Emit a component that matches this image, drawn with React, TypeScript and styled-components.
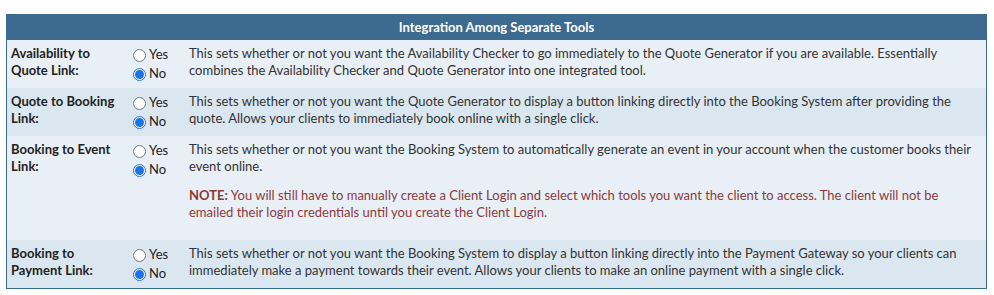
import { FC } from "react";
import styled, { createGlobalStyle } from "styled-components";

const GlobalStyle = createGlobalStyle`
  body {
    margin: 0;
    background: #ffffff;
    font-family: Lato, "Open Sans", sans-serif;
  }
`;

const Page = styled.div`
  padding: 14px 7px 0 6px;
`;

const Table = styled.div`
  border: 1px solid #3b6a8f;
  width: 979px;
  font-size: 13px;
  line-height: 17px;
`;

const Header = styled.div`
  background: #3d6a8f;
  color: #ffffff;
  font-weight: bold;
  text-align: center;
  height: 25px;
  line-height: 25px;
`;

const Row = styled.div<{ $alt?: boolean }>`
  display: grid;
  grid-template-columns: 122px 56px 1fr;
  background: ${(p) => (p.$alt ? "#dbe7f0" : "#e8eff6")};
  padding: 4px 0 6px 4px;
`;

const Label = styled.div`
  font-weight: bold;
  color: #222222;
  padding: 1px 12px 0 0;
`;

const Options = styled.div`
  display: flex;
  flex-direction: column;
  gap: 2px;
  padding-top: 2px;
`;

const Option = styled.label`
  display: flex;
  align-items: center;
  gap: 3px;
  color: #222222;
  height: 17px;
`;

const Radio = styled.span<{ $on?: boolean }>`
  width: 13px;
  height: 13px;
  box-sizing: border-box;
  border-radius: 50%;
  border: 1px solid ${(p) => (p.$on ? "#1a73e8" : "#767676")};
  background: #ffffff;
  display: flex;
  align-items: center;
  justify-content: center;
  margin-top: 2px;
  &::after {
    content: "";
    display: ${(p) => (p.$on ? "block" : "none")};
    width: 9px;
    height: 9px;
    border-radius: 50%;
    background: #1a73e8;
  }
`;

const Desc = styled.div`
  color: #333333;
  padding: 1px 8px 0 0;
`;

const Note = styled.div`
  color: #8b3a3a;
  margin: 12px 0 13px;
`;

const NoteTag = styled.strong`
  font-weight: bold;
  margin-right: 3px;
`;

interface ISetting {
  label: string;
  text: string;
  note?: boolean;
}

const settings: ISetting[] = [
  {
    label: "Availability to Quote Link:",
    text: "This sets whether or not you want the Availability Checker to go immediately to the Quote Generator if you are available. Essentially combines the Availability Checker and Quote Generator into one integrated tool.",
  },
  {
    label: "Quote to Booking Link:",
    text: "This sets whether or not you want the Quote Generator to display a button linking directly into the Booking System after providing the quote. Allows your clients to immediately book online with a single click.",
  },
  {
    label: "Booking to Event Link:",
    text: "This sets whether or not you want the Booking System to automatically generate an event in your account when the customer books their event online.",
    note: true,
  },
  {
    label: "Booking to Payment Link:",
    text: "This sets whether or not you want the Booking System to display a button linking directly into the Payment Gateway so your clients can immediately make a payment towards their event. Allows your clients to make an online payment with a single click.",
  },
];

const App: FC = () => {
  return (
    <Page>
      <GlobalStyle />
      <Table>
        <Header>Integration Among Separate Tools</Header>
        {settings.map((s, i) => (
          <Row key={s.label} $alt={i % 2 === 1}>
            <Label>{s.label}</Label>
            <Options>
              <Option>
                <Radio />
                Yes
              </Option>
              <Option>
                <Radio $on />
                No
              </Option>
            </Options>
            <Desc>
              <div>{s.text}</div>
              {s.note && (
                <Note>
                  <NoteTag>NOTE:</NoteTag>You will still have to manually create a Client Login and select which tools you want the client to access. The client will not be emailed their login credentials until you create the Client Login.
                </Note>
              )}
            </Desc>
          </Row>
        ))}
      </Table>
    </Page>
  );
};

export default App;
